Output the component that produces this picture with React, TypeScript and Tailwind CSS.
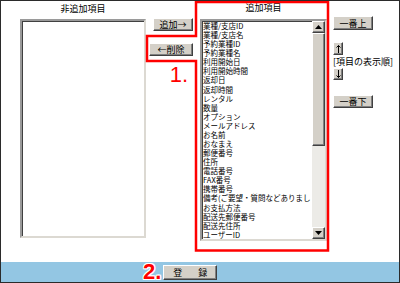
import type { ReactNode } from "react"

const items = [
  "業種/支店ID",
  "業種/支店名",
  "予約業種ID",
  "予約業種名",
  "利用開始日",
  "利用開始時間",
  "返却日",
  "返却時間",
  "レンタル",
  "数量",
  "オプション",
  "メールアドレス",
  "お名前",
  "おなまえ",
  "郵便番号",
  "住所",
  "電話番号",
  "FAX番号",
  "携帯番号",
  "備考(ご要望・質問などありまし",
  "お支払方法",
  "配送先郵便番号",
  "配送先住所",
  "ユーザーID",
]

function Btn({ className, children }: { className: string; children: ReactNode }) {
  return (
    <div
      className={
        "flex items-center justify-center whitespace-nowrap bg-[#d4d0c8] border border-white border-r-[#404040] border-b-[#404040] shadow-[inset_-1px_-1px_0_#808080] text-[9px] leading-none text-black " +
        className
      }
    >
      {children}
    </div>
  )
}

function Arrow({ up }: { up?: boolean }) {
  return (
    <div className="h-[12px] bg-[#d4d0c8] border border-white border-r-[#404040] border-b-[#404040] shadow-[inset_-1px_-1px_0_#808080] flex items-center justify-center">
      <svg width="7" height="4" viewBox="0 0 7 4">
        {up ? <polygon points="3.5,0 7,4 0,4" fill="#000" /> : <polygon points="0,0 7,0 3.5,4" fill="#000" />}
      </svg>
    </div>
  )
}

// thin line arrow used on the order buttons
function LineArrow({ up }: { up?: boolean }) {
  return (
    <svg width="5" height="8" viewBox="0 0 5 8" className={up ? "" : "rotate-180"}>
      <path d="M2.5 0.5V8M0.5 2.5L2.5 0.5L4.5 2.5" stroke="#000" strokeWidth="1" fill="none" />
    </svg>
  )
}

export default function App() {
  return (
    <div className="relative w-[400px] h-[283px] box-border border border-[#2b2b2b] bg-white flex flex-col overflow-hidden font-['Noto_Sans_CJK_JP','Liberation_Sans',sans-serif] text-black">
      <div className="h-[261px] flex pl-[19px]">
        {/* not added */}
        <div className="w-[126px] flex flex-col">
          <div className="h-[18px] pt-[2px] text-center text-[9px] leading-[12px]">非追加項目</div>
          <div className="h-[219px] bg-white border-2 border-[#9a9a9a] border-r-[#dcd9d2] border-b-[#dcd9d2] shadow-[inset_1px_1px_0_#404040]" />
        </div>

        {/* add / remove */}
        <div className="ml-[3px] w-[44px] flex flex-col items-end pt-[17px]">
          <Btn className="w-[40px] h-[13px]">追加→</Btn>
          <Btn className="mt-[12px] w-[44px] h-[13px]">←削除</Btn>
          <div className="mt-[8px] mr-[5px] text-[22px] leading-none text-[#ff0000] font-['Liberation_Sans',sans-serif]">1.</div>
        </div>

        {/* added */}
        <div className="ml-[7px] w-[127px] flex flex-col">
          <div className="h-[18px] pt-[1px] text-center text-[9px] leading-[12px]">追加項目</div>
          <div className="h-[222px] flex bg-white border-2 border-[#9a9a9a] border-r-[#dcd9d2] border-b-[#dcd9d2] shadow-[inset_1px_1px_0_#404040]">
            <div className="flex-1 overflow-hidden pl-[1px]">
              {items.map((it) => (
                <div key={it} className="h-[9.08px] text-[7.5px] leading-[9.08px] whitespace-nowrap">
                  {it}
                </div>
              ))}
            </div>
            <div className="w-[13px] flex flex-col bg-[#ecebe7]">
              <Arrow up />
              <div className="flex-1">
                <div className="h-[113px] bg-[#d4d0c8] border border-white border-r-[#404040] border-b-[#404040] shadow-[inset_-1px_-1px_0_#808080]" />
              </div>
              <Arrow />
            </div>
          </div>
        </div>

        {/* ordering */}
        <div className="ml-[6px] flex flex-col items-start pt-[15px]">
          <Btn className="w-[40px] h-[14px]">一番上</Btn>
          <Btn className="mt-[12px] w-[10px] h-[13px]">
            <LineArrow up />
          </Btn>
          <div className="h-[13px] text-[9px] leading-[13px] whitespace-nowrap">[項目の表示順]</div>
          <Btn className="w-[10px] h-[12px]">
            <LineArrow />
          </Btn>
          <Btn className="mt-[15px] w-[40px] h-[13px]">一番下</Btn>
        </div>
      </div>

      <div className="h-[20px] bg-[#93c6e3] flex items-center pl-[142px]">
        <span className="text-[22px] leading-none font-bold text-[#ff0000] font-['Liberation_Sans',sans-serif] [text-shadow:1px_0_#fff,-1px_0_#fff,0_1px_#fff,0_-1px_#fff,1px_1px_#fff,-1px_-1px_#fff,1px_-1px_#fff,-1px_1px_#fff]">
          2.
        </span>
        <Btn className="ml-[2px] w-[54px] h-[15px] gap-[16px] text-[8px]">
          <span>登</span>
          <span>録</span>
        </Btn>
      </div>

      <svg
        className="absolute left-[-1px] top-[-1px] w-[400px] h-[283px] pointer-events-none"
        viewBox="0 0 400 283"
      >
        <polygon
          points="196,2 328,2 328,250.5 196,250.5 196,61 147,61 147,36 196,36"
          fill="none"
          stroke="#ff0000"
          strokeWidth="2.5"
        />
      </svg>
    </div>
  )
}
